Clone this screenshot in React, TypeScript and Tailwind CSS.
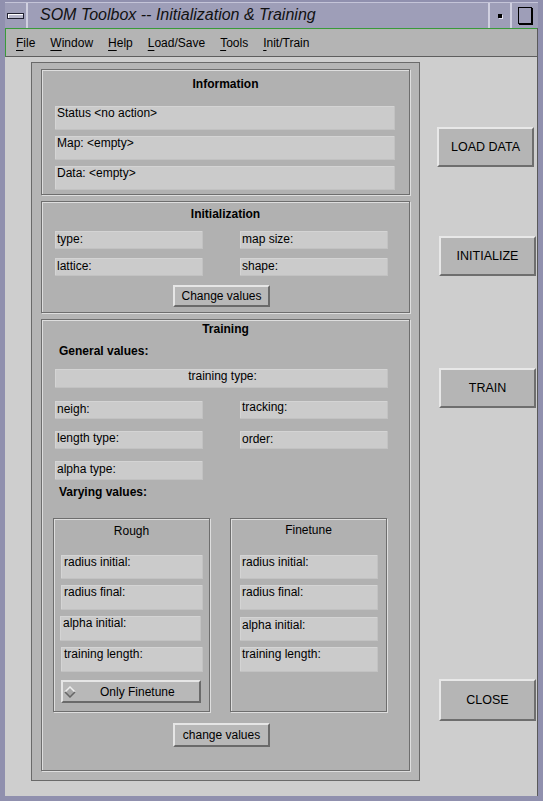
import React from "react";

function Field({
  label,
  className = "",
  lh = "leading-[14px]",
  center = false,
}: {
  label: string;
  className?: string;
  lh?: string;
  center?: boolean;
}) {
  return (
    <div
      className={`bg-[#cbcbcb] text-[12px] ${lh} pl-[2px] whitespace-nowrap shadow-[inset_-1px_-1px_0_#c2c2c2,inset_1px_1px_0_#d4d4d4] ${center ? "text-center" : ""} ${className}`}
    >
      {label}
    </div>
  );
}

function SmallButton({ label, className = "" }: { label: string; className?: string }) {
  return (
    <div
      className={`bg-[#b8b8b8] border-2 border-t-[#e6e6e6] border-l-[#e6e6e6] border-b-[#6a6a6a] border-r-[#6a6a6a] text-[12px] flex items-center justify-center whitespace-nowrap ${className}`}
    >
      {label}
    </div>
  );
}

function BigButton({ label, className = "" }: { label: string; className?: string }) {
  return (
    <div
      className={`w-[97px] h-[40px] bg-[#b5b5b5] border-2 border-t-[#e8e8e8] border-l-[#e8e8e8] border-b-[#6e6e6e] border-r-[#6e6e6e] text-[12.5px] flex items-center justify-center whitespace-nowrap ${className}`}
    >
      {label}
    </div>
  );
}

function Menu({ label }: { label: string }) {
  return (
    <span className="text-[12px] leading-[14px]">
      <span className="underline decoration-1 underline-offset-[3px]">{label[0]}</span>
      {label.slice(1)}
    </span>
  );
}

const etched =
  "bg-[#b1b1b1] border border-[#6e6e6e] shadow-[inset_1px_1px_0_#dedede,1px_1px_0_#dedede]";

export default function App() {
  return (
    <div className="w-[543px] h-[801px] bg-[#9090ae] pl-[5px] pr-[5px] pt-[2px] pb-[5px] font-['Liberation_Sans',Arial,sans-serif] text-black flex flex-col overflow-hidden">
      {/* title bar */}
      <div className="h-[26px] bg-[#9e9eb8] flex items-stretch border-t border-[#c4c4d8]">
        <div className="w-[23px] flex items-center justify-center border-r-2 border-[#d0d0e0]">
          <div className="w-[17px] h-[6px] border border-[#202030] bg-[#b8b8cc] shadow-[inset_1px_1px_0_#ffffff]"></div>
        </div>
        <div className="flex-1 pl-[12px] italic text-[16px] leading-[24px] text-[#111111] whitespace-nowrap">
          SOM Toolbox -- Initialization &amp; Training
        </div>
        <div className="w-[22px] border-l-2 border-[#d0d0e0] flex items-center justify-center">
          <div className="w-[4px] h-[4px] bg-black shadow-[1px_1px_0_#e0e0f0]"></div>
        </div>
        <div className="w-[28px] border-l-2 border-[#d0d0e0] flex items-center justify-center">
          <div className="w-[14px] h-[17px] border border-black shadow-[1px_1px_0_#000000]"></div>
        </div>
      </div>

      {/* client */}
      <div className="flex-1 flex flex-col border-r border-[#5a5a5a]">
        {/* menu bar */}
        <div className="h-[29px] bg-[#b4b4b4] border-t border-l border-t-[#3a9a3a] border-l-[#3a9a3a] border-b border-b-[#5e5e5e] flex items-center pl-[10px] gap-[15px] pt-[1px]">
          <Menu label="File" />
          <Menu label="Window" />
          <Menu label="Help" />
          <Menu label="Load/Save" />
          <Menu label="Tools" />
          <Menu label="Init/Train" />
        </div>

        {/* content */}
        <div className="flex-1 bg-[#cecece] flex pl-[26px] pt-[5px]">
          {/* left panel */}
          <div className="w-[389px] h-[719px] border border-[#6a6a6a] bg-[#b5b5b5] px-[9px] pt-[6px] flex flex-col gap-[6px]">
            {/* Information */}
            <div className={`h-[126px] ${etched} pt-[7px] flex flex-col`}>
              <div className="text-center font-bold text-[12px] leading-[14px]">Information</div>
              <div className="mt-[15px] ml-[13px] w-[340px] flex flex-col gap-[6px]">
                <Field label="Status <no action>" className="h-[24px]" />
                <Field label="Map: <empty>" className="h-[24px]" />
                <Field label="Data: <empty>" className="h-[24px]" />
              </div>
            </div>

            {/* Initialization */}
            <div className={`h-[112px] ${etched} pt-[5px] flex flex-col`}>
              <div className="text-center font-bold text-[12px] leading-[14px]">Initialization</div>
              <div className="mt-[10px] ml-[13px] w-[333px] grid grid-cols-[148px_148px] justify-between gap-y-[9px]">
                <Field label="type:" className="h-[18px]" lh="leading-[17px]" />
                <Field label="map size:" className="h-[18px]" lh="leading-[17px]" />
                <Field label="lattice:" className="h-[18px]" lh="leading-[17px]" />
                <Field label="shape:" className="h-[18px]" lh="leading-[17px]" />
              </div>
              <div className="mt-[9px] ml-[131px]">
                <SmallButton label="Change values" className="w-[97px] h-[22px]" />
              </div>
            </div>

            {/* Training */}
            <div className={`h-[452px] ${etched} pt-[2px] flex flex-col`}>
              <div className="text-center font-bold text-[12px] leading-[14px]">Training</div>
              <div className="mt-[8px] ml-[17px] font-bold text-[12px] leading-[14px]">General values:</div>
              <div className="mt-[11px] ml-[13px] w-[333px]">
                <Field label="training type:" className="h-[19px]" lh="leading-[15px]" center />
              </div>
              <div className="mt-[13px] ml-[13px] w-[333px] grid grid-cols-[148px_148px] justify-between gap-y-[12px]">
                <Field label="neigh:" className="h-[18px]" lh="leading-[17px]" />
                <Field label="tracking:" className="h-[18px]" lh="leading-[13px]" />
                <Field label="length type:" className="h-[18px]" lh="leading-[15px]" />
                <Field label="order:" className="h-[18px]" lh="leading-[17px]" />
                <Field label="alpha type:" className="h-[19px]" lh="leading-[16px]" />
              </div>
              <div className="mt-[5px] ml-[17px] font-bold text-[12px] leading-[14px]">Varying values:</div>

              <div className="mt-[19px] ml-[11px] flex gap-[20px]">
                {/* Rough */}
                <div className={`w-[157px] h-[194px] ${etched} pt-[5px] flex flex-col`}>
                  <div className="text-center text-[12px] leading-[14px]">Rough</div>
                  <div className="mt-[17px] flex flex-col gap-[6px]">
                    <Field label="radius initial:" className="ml-[7px] w-[142px] h-[24px] pl-[3px]" />
                    <Field label="radius final:" className="ml-[7px] w-[142px] h-[25px] pl-[3px]" />
                    <Field label="alpha initial:" className="ml-[6px] w-[141px] h-[25px] pl-[3px]" />
                    <Field label="training length:" className="ml-[7px] w-[142px] h-[25px] pl-[3px]" />
                  </div>
                  <div className="mt-[8px] ml-[7px] w-[140px] h-[23px] bg-[#b8b8b8] border-2 border-t-[#e6e6e6] border-l-[#e6e6e6] border-b-[#6a6a6a] border-r-[#6a6a6a] flex items-center text-[12px]">
                    <svg width="12" height="12" viewBox="0 0 12 12" className="ml-[1px]">
                      <polygon points="6,1 11,6 6,11 1,6" fill="#a8a8a8" />
                      <polyline points="1,6 6,1 11,6" fill="none" stroke="#ececec" strokeWidth="1.5" />
                      <polyline points="1,6 6,11 11,6" fill="none" stroke="#666666" strokeWidth="1.5" />
                    </svg>
                    <span className="ml-[24px]">Only Finetune</span>
                  </div>
                </div>
                {/* Finetune */}
                <div className={`w-[157px] h-[194px] ${etched} pt-[4px] flex flex-col`}>
                  <div className="text-center text-[12px] leading-[14px]">Finetune</div>
                  <div className="mt-[18px] flex flex-col gap-[6px]">
                    <Field label="radius initial:" className="ml-[9px] w-[138px] h-[24px] pl-[2px]" />
                    <Field label="radius final:" className="ml-[9px] w-[138px] h-[25px] pl-[2px]" />
                    <Field label="alpha initial:" className="ml-[9px] w-[138px] h-[24px] pl-[2px] mt-[1px]" lh="leading-[16px]" />
                    <Field label="training length:" className="ml-[9px] w-[138px] h-[25px] pl-[2px]" />
                  </div>
                </div>
              </div>

              <div className="mt-[11px] ml-[131px]">
                <SmallButton label="change values" className="w-[97px] h-[24px]" />
              </div>
            </div>
          </div>

          {/* right column */}
          <div className="ml-[17px] w-[99px] flex flex-col">
            <BigButton label="LOAD DATA" className="mt-[65px]" />
            <BigButton label="INITIALIZE" className="mt-[69px] ml-[2px]" />
            <BigButton label="TRAIN" className="mt-[92px] ml-[2px]" />
            <BigButton label="CLOSE" className="mt-[271px] ml-[2px] h-[42px]" />
          </div>
        </div>
      </div>
    </div>
  );
}
